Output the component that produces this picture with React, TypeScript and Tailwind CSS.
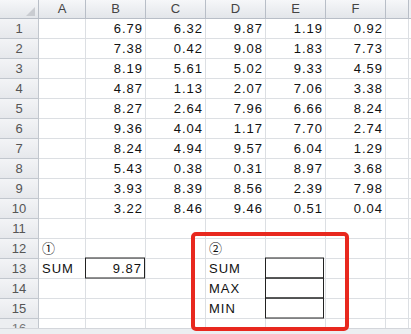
const cols = ['A', 'B', 'C', 'D', 'E', 'F', '']

const data: string[][] = [
  ['6.79', '6.32', '9.87', '1.19', '0.92'],
  ['7.38', '0.42', '9.08', '1.83', '7.73'],
  ['8.19', '5.61', '5.02', '9.33', '4.59'],
  ['4.87', '1.13', '2.07', '7.06', '3.38'],
  ['8.27', '2.64', '7.96', '6.66', '8.24'],
  ['9.36', '4.04', '1.17', '7.70', '2.74'],
  ['8.24', '4.94', '9.57', '6.04', '1.29'],
  ['5.43', '0.38', '0.31', '8.97', '3.68'],
  ['3.93', '8.39', '8.56', '2.39', '7.98'],
  ['3.22', '8.46', '9.46', '0.51', '0.04'],
]

type Cell = { text?: string; align?: 'left' | 'right'; boxed?: 'top' | 'mid' | 'single' }

const buildRows = (): Cell[][] => {
  const rows: Cell[][] = data.map((r) => [{}, ...r.map((v) => ({ text: v, align: 'right' as const })), {}])
  rows.push([{}, {}, {}, {}, {}, {}, {}])
  rows.push([{ text: '①' }, {}, {}, { text: '②' }, {}, {}, {}])
  rows.push([{ text: 'SUM' }, { text: '9.87', align: 'right', boxed: 'single' }, {}, { text: 'SUM' }, { boxed: 'top' }, {}, {}])
  rows.push([{}, {}, {}, { text: 'MAX' }, { boxed: 'mid' }, {}, {}])
  rows.push([{}, {}, {}, { text: 'MIN' }, { boxed: 'mid' }, {}, {}])
  return rows
}

const gridCols = 'grid grid-cols-[39px_47px_60px_60px_60px_60px_60px_23px_1fr]'

export default function App() {
  const rows = buildRows()
  return (
    <div
      className="relative h-[334px] w-[411px] overflow-hidden bg-white text-[13px] text-[#111]"
      style={{ fontFamily: '"Liberation Sans", "Noto Sans CJK JP", sans-serif' }}
    >
      {/* column headers */}
      <div className={gridCols}>
        <div className="relative h-[19px] border-b border-r border-[#b8bec7] bg-gradient-to-b from-[#f6f7f9] to-[#e3e6ea]">
          <span className="absolute bottom-[2px] right-[3px] h-0 w-0 border-b-[9px] border-l-[9px] border-b-[#c9ccd1] border-l-transparent" />
        </div>
        {cols.map((c, i) => (
          <div
            key={i}
            className="flex h-[19px] items-center justify-center border-b border-r border-[#b8bec7] bg-gradient-to-b from-[#f6f7f9] to-[#e3e6ea] text-[13px] text-[#444]"
          >
            {c}
          </div>
        ))}
        <div className="h-[19px] border-b border-[#b8bec7] bg-[#eef0f3]" />
      </div>

      {rows.map((row, ri) => (
        <div key={ri} className={gridCols}>
          <div className="flex h-[20px] items-center justify-center border-b border-r border-[#c2c7ce] bg-gradient-to-b from-[#f3f4f6] to-[#e6e8ec] text-[13px] text-[#555]">
            {ri + 1}
          </div>
          {row.map((cell, ci) => (
            <div
              key={ci}
              className={
                'flex h-[20px] items-center border-b border-r border-[#dcdfe3] tracking-[1px] ' +
                (cell.align === 'right' ? 'justify-end pr-[2px]' : 'pl-[3px]')
              }
            >
              {cell.boxed ? (
                <div
                  className={
                    'flex h-[21px] w-[61px] -translate-x-[1px] -translate-y-[0.5px] items-center justify-end border border-[#222] pr-[2px] ' +
                    (cell.align === 'right' ? '-mr-[3px] ' : '-ml-[3px] ') +
                    (cell.boxed === 'mid' ? '-mt-[1px] ' : '')
                  }
                >
                  {cell.text}
                </div>
              ) : (
                cell.text
              )}
            </div>
          ))}
          <div className="h-[20px] border-b border-[#dcdfe3]" />
        </div>
      ))}

      {/* row 16, cut off */}
      <div className={gridCols}>
        <div className="relative h-[9px] overflow-hidden border-r border-[#c2c7ce] bg-[#eceef1] text-center text-[13px] leading-[20px] text-[#777]">
          16
        </div>
        {cols.map((_, i) => (
          <div key={i} className="h-[9px] border-r border-[#dcdfe3]" />
        ))}
        <div />
      </div>
      <div className="h-[10px] border-t border-[#d3d6db] bg-[#eceef1]" />

      {/* red highlight */}
      <div className="absolute left-[191px] top-[232px] h-[99px] w-[158px] rounded-[5px] border-[4px] border-[#e8281e]" />
    </div>
  )
}
